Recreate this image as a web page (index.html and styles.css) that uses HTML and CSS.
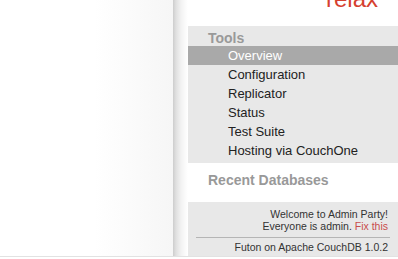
FILE: index.html
```html
<!DOCTYPE html>
<html>
<head>
<meta charset="utf-8">
<link rel="stylesheet" href="styles.css">
</head>
<body>
<div class="page">
  <div class="main"></div>
  <div class="sidebar">
    <div class="shadow"></div>
    <div class="panel">
      <div class="logo"><span class="relax">relax</span></div>
      <div class="tools">
        <h3 class="heading">Tools</h3>
        <ul class="nav">
          <li class="nav-item selected">Overview</li>
          <li class="nav-item">Configuration</li>
          <li class="nav-item">Replicator</li>
          <li class="nav-item">Status</li>
          <li class="nav-item">Test Suite</li>
          <li class="nav-item">Hosting via CouchOne</li>
        </ul>
      </div>
      <div class="recent">
        <h3 class="heading">Recent Databases</h3>
      </div>
      <div class="footer">
        <div class="userctx">
          <div>Welcome to Admin Party!</div>
          <div>Everyone is admin. <span class="fix">Fix this</span></div>
        </div>
        <div class="version">Futon on Apache CouchDB 1.0.2</div>
      </div>
    </div>
  </div>
</div>
</body>
</html>
```
FILE: styles.css
```css
html, body {
  margin: 0;
  padding: 0;
  background: #fff;
  font-family: "Liberation Sans", Arial, sans-serif;
  overflow: hidden;
}
.page {
  display: flex;
  height: 256px;
  border-bottom: 1px solid #e2e2e2;
}
.main {
  width: 173px;
  background: linear-gradient(to right, #fff 0, #fff 95px, #f6f6f6 173px);
}
.sidebar {
  display: flex;
  flex: 1;
}
.shadow {
  width: 15px;
  background: linear-gradient(to right, #cdcdcd 0, #e0e0e0 3px, #f2f2f2 8px, #fcfcfc 13px, #fff 15px);
}
.panel {
  width: 210px;
  display: flex;
  flex-direction: column;
}
.logo {
  height: 26px;
  overflow: hidden;
  text-align: right;
  padding-right: 20px;
  background: #fff;
}
.relax {
  display: block;
  margin-top: -13px;
  font-size: 24px;
  line-height: 24px;
  color: #d5402f;
}
.tools {
  background: #e8e8e8;
  padding-bottom: 3px;
}
.heading {
  margin: 0;
  padding: 4px 0 0 20px;
  font-size: 14px;
  line-height: 16px;
  font-weight: bold;
  color: #999;
}
.nav {
  list-style: none;
  margin: 0;
  padding: 0;
}
.nav-item {
  padding-left: 40px;
  font-size: 13px;
  line-height: 19px;
  color: #222;
}
.nav-item.selected {
  background: #a9a9a9;
  color: #fff;
}
.recent {
  background: #fff;
  height: 39px;
}
.recent .heading {
  padding-top: 8px;
  line-height: 19px;
}
.footer {
  flex: 1;
  background: #e8e8e8;
  font-size: 10.5px;
  line-height: 12px;
  color: #333;
  text-align: right;
}
.userctx {
  padding: 6px 2px 5px 0;
  margin: 0 8px;
  border-bottom: 1px solid #b5b5b5;
}
.fix {
  color: #c94c4c;
}
.version {
  padding: 3px 10px 0 0;
}
```
